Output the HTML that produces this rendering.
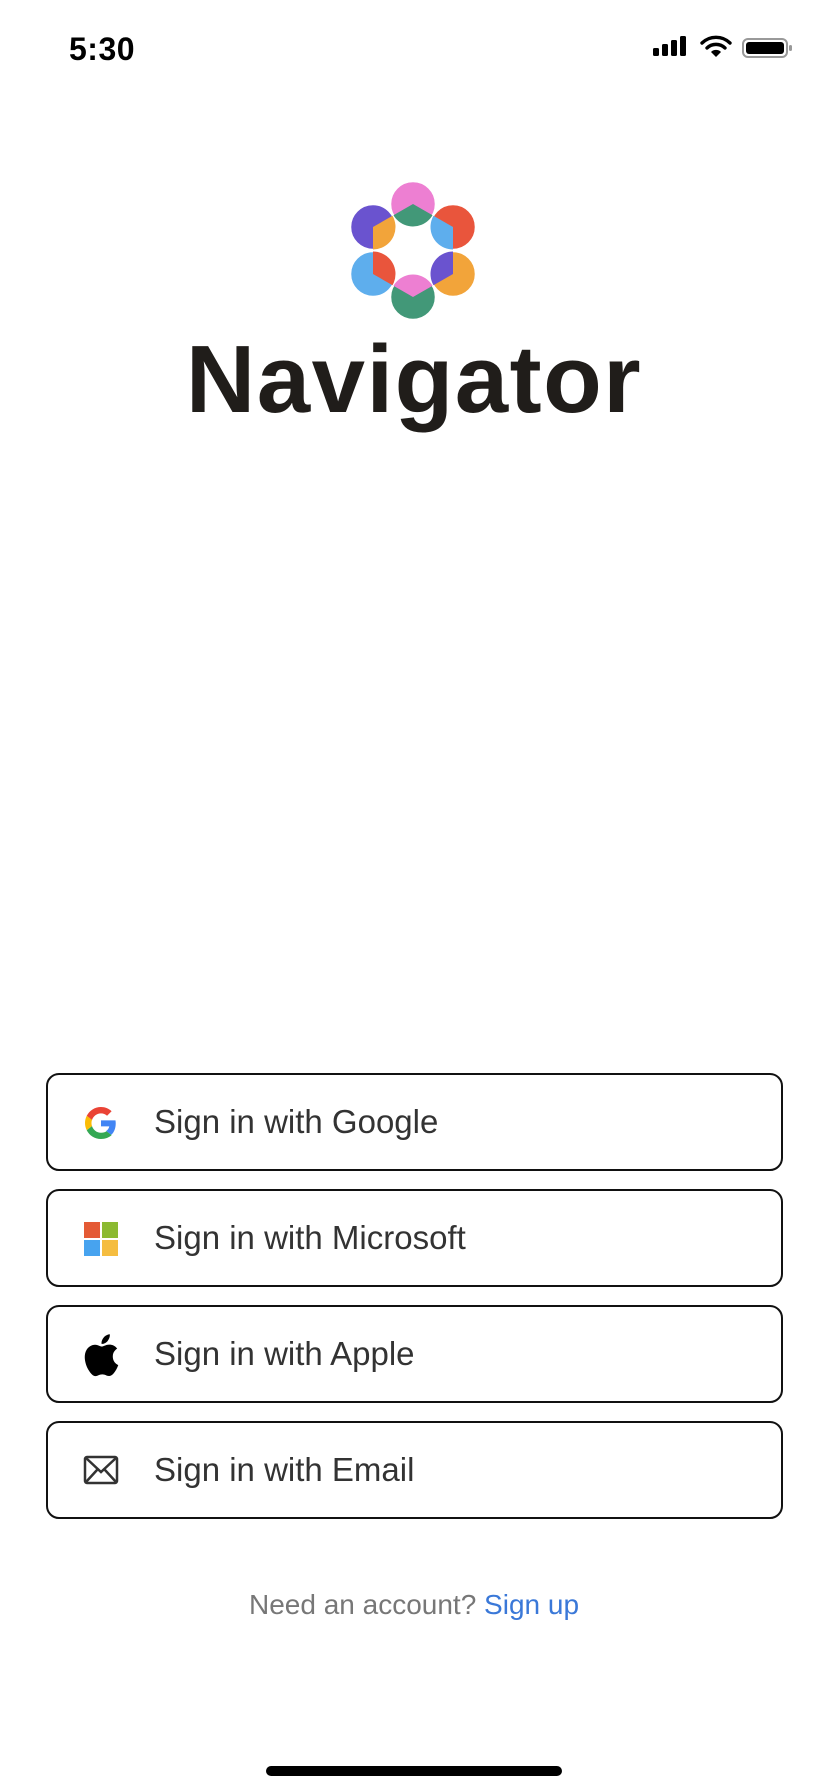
<!DOCTYPE html>
<html><head><meta charset="utf-8"><style>
*{margin:0;padding:0;box-sizing:border-box}
body{width:828px;height:1792px;background:#fff;position:relative;overflow:hidden;font-family:"Liberation Sans",sans-serif}
.time{position:absolute;left:69px;top:31px;font-size:32px;font-weight:bold;color:#000;letter-spacing:0.5px}
.title{position:absolute;left:0;width:828px;top:320px;text-align:center;font-size:96px;font-weight:bold;color:#201d1a;letter-spacing:1.5px;line-height:120px}
.btn{position:absolute;left:46px;width:737px;height:98px;border:2px solid #111;border-radius:13px}
.btn span{position:absolute;left:106px;top:28px;font-size:33px;color:#333}
.btn svg{position:absolute}
.foot{position:absolute;top:1589px;width:828px;text-align:center;font-size:28px;color:#777}
.foot b{font-weight:normal;color:#3a78d8}
.home{position:absolute;left:266px;top:1766px;width:296px;height:10px;border-radius:5px;background:#000}
</style></head><body>
<div class="time">5:30</div>
<svg style="position:absolute;left:650px;top:34px" width="145" height="26" viewBox="0 0 145 26">
<rect x="3" y="14" width="6" height="8" rx="1.5"/><rect x="12" y="10" width="6" height="12" rx="1.5"/><rect x="21" y="6" width="6" height="16" rx="1.5"/><rect x="30" y="2" width="6" height="20" rx="1.5"/>
<g fill="none" stroke="#000" stroke-width="3.4" stroke-linecap="round">
<path d="M52 9 a20 20 0 0 1 28 0"/><path d="M57 14 a13 13 0 0 1 18 0"/></g>
<path d="M66 23 l-5 -5 a7 7 0 0 1 10 0z"/>
<rect x="93" y="5" width="44" height="18" rx="5" fill="none" stroke="#999" stroke-width="2"/>
<rect x="96" y="8" width="38" height="12" rx="3"/><rect x="139" y="11" width="3" height="6" rx="1.5" fill="#999"/>
</svg>
<svg style="position:absolute;left:0;top:0" width="828" height="360">
<defs><clipPath id="hx"><polygon points="413,204 453,227 453,274 413,297 373,274 373,227"/></clipPath></defs>
<g stroke="#fff" stroke-width="1.5">
<circle cx="413" cy="204" r="22.5" fill="#ed7fd2"/>
<circle cx="453" cy="227" r="22.5" fill="#e9553c"/>
<circle cx="373" cy="227" r="22.5" fill="#6a53cf"/>
<circle cx="373" cy="274" r="22.5" fill="#5eaeed"/>
<circle cx="453" cy="274" r="22.5" fill="#f2a43a"/>
<circle cx="413" cy="297" r="22.5" fill="#429878"/>
</g>
<g clip-path="url(#hx)">
<circle cx="413" cy="204" r="22.5" fill="#429878"/>
<circle cx="453" cy="227" r="22.5" fill="#5eaeed"/>
<circle cx="373" cy="227" r="22.5" fill="#f2a43a"/>
<circle cx="373" cy="274" r="22.5" fill="#e9553c"/>
<circle cx="453" cy="274" r="22.5" fill="#6a53cf"/>
<circle cx="413" cy="297" r="22.5" fill="#ed7fd2"/>
</g>
</svg>
<div class="title">Navigator</div>

<div class="btn" style="top:1073px"><svg style="left:37px;top:32px" width="32" height="32" viewBox="0 0 48 48"><path fill="#EA4335" d="M24 9.5c3.5 0 6.6 1.2 9.1 3.6l6.8-6.8C35.8 2.4 30.3 0 24 0 14.6 0 6.6 5.4 2.6 13.3l7.9 6.2C12.4 13.7 17.7 9.5 24 9.5z"/><path fill="#4285F4" d="M46.1 24.5c0-1.600-.1-3.1-.4-4.5H24v9h12.4c-.5 2.9-2.2 5.3-4.7 7l7.6 5.9c4.4-4.1 6.8-10.1 6.8-17.4z"/><path fill="#FBBC05" d="M10.5 28.6c-.5-1.4-.8-3-.8-4.6s.3-3.2.8-4.6l-7.9-6.2C.9 16.5 0 20.1 0 24s.9 7.5 2.6 10.8l7.9-6.2z"/><path fill="#34A853" d="M24 48c6.5 0 11.9-2.1 15.9-5.8l-7.6-5.9c-2.1 1.4-4.9 2.3-8.300 2.3-6.3 0-11.6-4.2-13.5-10l-7.9 6.2C6.6 42.6 14.6 48 24 48z"/></svg><span>Sign in with Google</span></div>

<div class="btn" style="top:1189px"><svg style="left:36px;top:31px" width="34" height="34" viewBox="0 0 34 34"><rect width="16" height="16" fill="#e45a35"/><rect x="18" width="16" height="16" fill="#8bba32"/><rect y="18" width="16" height="16" fill="#47a3ef"/><rect x="18" y="18" width="16" height="16" fill="#f5bd40"/></svg><span>Sign in with Microsoft</span></div>

<div class="btn" style="top:1305px"><svg style="left:35px;top:26px" width="36" height="44" viewBox="0 0 384 470"><path d="M318 250c-1-55 45-82 47-83-26-38-66-43-80-43-34-4-67 20-84 20-18 0-44-20-73-19-37 1-72 22-91 56-39 68-10 168 28 223 18 27 40 57 69 56 28-1 38-18 72-18s43 18 73 17c30 0 49-27 67-54 21-31 30-61 30-63-1 0-58-22-58-92zM263 85c15-19 26-45 23-71-22 1-49 15-65 34-14 16-27 43-23 68 25 2 50-12 65-31z"/></svg><span>Sign in with Apple</span></div>

<div class="btn" style="top:1421px"><svg style="left:35px;top:32px" width="36" height="30" viewBox="0 0 36 30"><rect x="2" y="2" width="32" height="26" rx="2" fill="none" stroke="#333" stroke-width="2.5"/><path d="M3 3 L18 17 L33 3 M3 27 L14 15 M33 27 L22 15" fill="none" stroke="#333" stroke-width="2.5"/></svg><span>Sign in with Email</span></div>

<div class="foot">Need an account? <b>Sign up</b></div>
<div class="home"></div>
</body></html>
